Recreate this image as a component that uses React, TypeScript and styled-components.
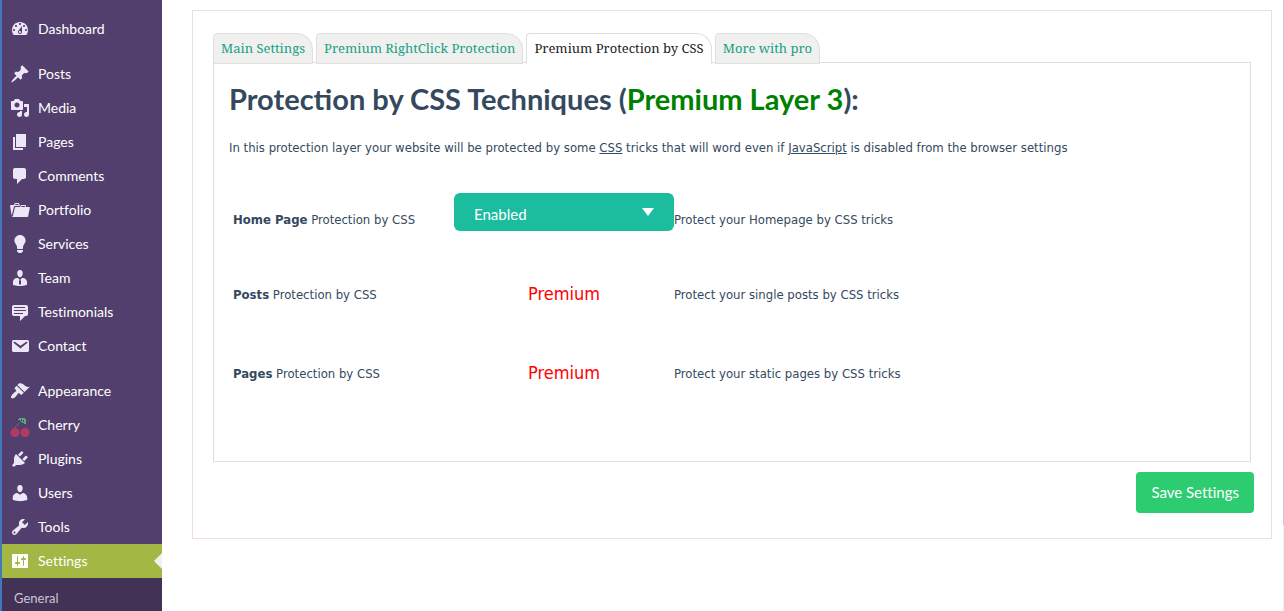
import React from 'react';
import styled, { createGlobalStyle } from 'styled-components';

const GlobalStyle = createGlobalStyle`
  * { box-sizing: border-box; }
  body {
    margin: 0;
    background: #fff;
    color: #34495e;
    font-family: 'DejaVu Sans Condensed', 'DejaVu Sans', sans-serif;
    font-size: 13px;
    font-variant-ligatures: none;
  }
`;

const lato = `Lato, 'Open Sans', sans-serif`;

const Page = styled.div`
  display: flex;
  min-height: 100vh;
`;

const Sidebar = styled.nav`
  display: flex;
  flex-direction: column;
  flex: 0 0 162px;
  padding-top: 12px;
  border-left: 2px solid #4177bb;
  background: #523f6d;
  font-family: ${lato};
  font-size: 14px;
`;

const MenuGroup = styled.ul`
  list-style: none;
  margin: 0 0 11px;
  padding: 0;
  &:last-of-type { margin-bottom: 0; }
`;

const MenuLink = styled.a<{ $active?: boolean }>`
  display: flex;
  align-items: center;
  gap: 8px;
  height: 34px;
  padding-left: 8px;
  color: #fff;
  text-decoration: none;
  background: ${(p) => (p.$active ? '#a3b745' : 'transparent')};
`;

const MenuLabel = styled.span`
  padding-bottom: 2px;
`;

const MenuIcon = styled.svg<{ $active?: boolean }>`
  flex: none;
  width: 20px;
  height: 20px;
  overflow: visible;
  fill: ${(p) => (p.$active ? '#fff' : '#ece6f6')};
`;

const ActiveArrow = styled.span`
  margin-left: auto;
  border: 8px solid transparent;
  border-left-width: 0;
  border-right-color: #f1f1f1;
`;

const Submenu = styled.div`
  flex: 1;
  padding: 10px 12px 0;
  background: #413256;
`;

const SubmenuLink = styled.a`
  color: #cbc5d3;
  font-size: 13px;
  line-height: 20px;
  text-decoration: none;
`;

const Main = styled.main`
  flex: 1;
  min-width: 0;
  padding: 10px 11px 10px 30px;
`;

const SettingsBox = styled.form`
  padding: 22px 17px 25px 20px;
  border: 1px solid #eedde2;
`;

const Tabs = styled.div`
  display: flex;
  gap: 3px;
`;

const Tab = styled.button<{ $active?: boolean }>`
  position: relative;
  height: 31px;
  margin-bottom: -2px;
  padding: 0 7px 2px;
  border: 1px solid #dfdfdf;
  border-bottom-color: ${(p) => (p.$active ? '#fff' : '#dfdfdf')};
  border-radius: 4px 16px 0 0;
  background: ${(p) => (p.$active ? '#fff' : '#f0f0ef')};
  color: ${(p) => (p.$active ? '#222' : '#16a085')};
  font: 13px 'Noto Serif', Georgia, serif;
  white-space: nowrap;
`;

const Panel = styled.section`
  min-height: 400px;
  margin-right: 3px;
  padding: 16px 15px 48px;
  border: 1px solid #dfdfdf;
`;

const Title = styled.h1`
  margin: 0;
  font: bold 29px/40px ${lato};
`;

const Green = styled.span`
  color: #008000;
`;

const Intro = styled.p`
  margin: 20px 0 26px;
  line-height: 18px;
`;

const OptionsTable = styled.table`
  width: 100%;
  border-collapse: collapse;
  table-layout: fixed;
`;

const OptionRow = styled.tr<{ $height: number }>`
  height: ${(p) => p.$height}px;
`;

const NameCell = styled.th`
  width: 225px;
  padding: 0 0 0 4px;
  font-weight: normal;
  text-align: left;
`;

const ControlCell = styled.td`
  width: 220px;
  padding: 0 0 2px;
  text-align: center;
`;

const TextCell = styled.td`
  padding: 0;
`;

const SelectWrap = styled.div`
  display: grid;
  align-items: center;
  margin-bottom: 12px;
`;

const Select = styled.select`
  grid-area: 1 / 1;
  width: 100%;
  height: 38px;
  padding: 4px 20px 0;
  border: 0;
  border-radius: 6px;
  appearance: none;
  background: #1cbc9f;
  color: #fff;
  font: 15px ${lato};
`;

const SelectArrow = styled.svg`
  grid-area: 1 / 1;
  justify-self: end;
  width: 12px;
  height: 8px;
  margin-right: 20px;
  fill: #fff;
  pointer-events: none;
`;

const Premium = styled.span`
  color: #f00;
  font-size: 18px;
`;

const Actions = styled.div`
  display: flex;
  justify-content: flex-end;
  margin-top: 10px;
`;

const SaveButton = styled.button`
  height: 41px;
  padding: 0 15px 2px;
  border: 0;
  border-radius: 4px;
  background: #2ecc71;
  color: #fff;
  font: 15px ${lato};
  font-variant-ligatures: none;
`;

const ScrollTrack = styled.div`
  flex: 0 0 1px;
  display: flex;
  background: #f0f0f0;
`;

const ScrollThumb = styled.div`
  width: 1px;
  height: 86%;
  background: #cfc8cc;
`;

type Item = { label: string; path?: string; active?: boolean };

const groups: Item[][] = [
  [
    {
      label: 'Dashboard',
      path: 'M3.76 16h12.48c1.1-1.37 1.76-3.11 1.76-5 0-4.42-3.58-8-8-8s-8 3.58-8 8c0 1.89.66 3.63 1.76 5zM10 4c.55 0 1 .45 1 1s-.45 1-1 1-1-.45-1-1 .45-1 1-1zM6 6c.55 0 1 .45 1 1s-.45 1-1 1-1-.45-1-1 .45-1 1-1zm8 0c.55 0 1 .45 1 1s-.45 1-1 1-1-.45-1-1 .45-1 1-1zm-5.37 5.55L12 7v6c0 1.1-.9 2-2 2s-2-.9-2-2c0-.57.24-1.08.63-1.45zM4 10c.55 0 1 .45 1 1s-.45 1-1 1-1-.45-1-1 .45-1 1-1zm12 0c.55 0 1 .45 1 1s-.45 1-1 1-1-.45-1-1 .45-1 1-1zm-5 3c0-.55-.45-1-1-1s-1 .45-1 1 .45 1 1 1 1-.45 1-1z',
    },
  ],
  [
    {
      label: 'Posts',
      path: 'M10.44 3.02l1.82-1.82 6.36 6.35-1.83 1.82c-1.05-.68-2.48-.57-3.41.36l-.75.75c-.92.93-1.04 2.35-.35 3.41l-1.83 1.82-2.41-2.41-2.8 2.79c-.42.42-3.38 2.71-3.8 2.29s1.86-3.39 2.28-3.81l2.79-2.79L4.1 9.36l1.83-1.82c1.05.69 2.48.57 3.4-.36l.75-.75c.93-.92 1.05-2.35.36-3.41z',
    },
    {
      label: 'Media',
      path: 'M13 11V4c0-.55-.45-1-1-1h-1.67L9 1H5L3.67 3H2c-.55 0-1 .45-1 1v7c0 .55.45 1 1 1h10c.55 0 1-.45 1-1zM7 4.5c1.38 0 2.5 1.12 2.5 2.5S8.38 9.5 7 9.5 4.5 8.38 4.5 7 5.62 4.5 7 4.5zM14 6h5v10.5c0 1.38-1.12 2.5-2.5 2.5S14 17.88 14 16.5s1.12-2.5 2.5-2.5c.17 0 .34.02.5.05V9h-3V6zm-4 8.05V13h2v3.5c0 1.38-1.12 2.5-2.5 2.5S7 17.88 7 16.5 8.12 14 9.5 14c.17 0 .34.02.5.05z',
    },
    { label: 'Pages', path: 'M6 15V2h10v13H6zm-1 1h8v2H3V5h2v11z' },
    {
      label: 'Comments',
      path: 'M5 2h9c1.1 0 2 .9 2 2v7c0 1.1-.9 2-2 2h-2l-5 5v-5H5c-1.1 0-2-.9-2-2V4c0-1.1.9-2 2-2z',
    },
    {
      label: 'Portfolio',
      path: 'M4 5H.78c-.37 0-.74.32-.69.84l1.56 9.99S3.5 8.47 3.86 6.7c.11-.53.61-.7.98-.7H10s-.7-2.08-.77-2.31C9.11 3.25 8.89 3 8.45 3H5.14c-.36 0-.7.23-.8.64C4.25 4.04 4 5 4 5zm4.88 0h-4s.42-1 .87-1h2.13c.48 0 1 1 1 1zM2.67 16.25c-.31.47-.76.75-1.26.75h15.73c.54 0 .92-.31 1.03-.83.44-2.19 1.68-8.44 1.68-8.44.07-.5-.3-.73-.62-.73H16V5.53c0-.16-.26-.53-.66-.53h-3.76c-.52 0-.87.58-.87.58L10 7H5.59c-.32 0-.63.19-.69.5 0 0-1.59 6.7-1.72 7.33-.07.37-.22.99-.51 1.42zM15.38 7H11s.58-1 1.13-1h2.29c.71 0 .96 1 .96 1z',
    },
    {
      label: 'Services',
      path: 'M10 1c3.11 0 5.63 2.52 5.63 5.62 0 1.84-2.03 4.58-2.03 4.58-.33.44-.6 1.25-.6 1.8v1c0 .55-.45 1-1 1H8c-.55 0-1-.45-1-1v-1c0-.55-.27-1.36-.6-1.8 0 0-2.02-2.74-2.02-4.58C4.38 3.52 6.89 1 10 1zM7 16.87V16h6v.87c0 .62-.13 1.13-.75 1.13H12c0 .62-.4 1-1.02 1h-2c-.61 0-.98-.38-.98-1h-.25c-.62 0-.75-.51-.75-1.13z',
    },
    {
      label: 'Team',
      path: 'M7.3 6l-.03-.19c-.04-.37-.05-.73-.03-1.08.02-.36.1-.71.25-1.04.14-.32.31-.61.52-.86s.49-.46.83-.6c.34-.15.72-.23 1.13-.23.69 0 1.26.2 1.71.59s.76.87.91 1.44.18 1.16.09 1.78l-.03.19c-.01.09-.05.25-.11.48-.05.24-.12.47-.2.69-.08.21-.19.45-.34.72-.14.27-.3.49-.47.69-.18.19-.4.34-.67.48-.27.13-.55.19-.86.19s-.59-.06-.87-.19c-.26-.13-.49-.29-.67-.5-.18-.2-.34-.42-.49-.66-.15-.25-.26-.49-.34-.73-.09-.25-.16-.47-.21-.67-.06-.21-.1-.37-.12-.5zm9.2 6.24c.41.7.5 1.41.5 2.14v2.49c0 .03-.12.08-.29.13-.18.04-.42.13-.97.27-.55.12-1.1.24-1.65.34s-1.19.19-1.95.27c-.75.08-1.46.12-2.13.12-.68 0-1.39-.04-2.14-.12-.75-.07-1.4-.17-1.98-.27-.58-.11-1.08-.23-1.56-.34-.49-.11-.8-.21-1.06-.29L3 16.87v-2.49c0-.75.07-1.46.46-2.15s.81-1.25 1.5-1.68C5.66 10.12 7.19 10 8 10l1.67 1.67L9 13v3l1.02 1.08L11 16v-3l-.68-1.33L11.97 10c.77 0 2.2.07 2.9.52.71.45 1.21 1.02 1.63 1.72z',
    },
    {
      label: 'Testimonials',
      path: 'M4 3h12c.55 0 1.02.2 1.41.59S18 4.45 18 5v7c0 .55-.2 1.02-.59 1.41S16.55 14 16 14h-1l-5 5v-5H4c-.55 0-1.02-.2-1.41-.59S2 12.55 2 12V5c0-.55.2-1.02.59-1.41S3.45 3 4 3zm11 2H4v1h11V5zm1 3H4v1h12V8zm-3 3H4v1h9v-1z',
    },
    {
      label: 'Contact',
      path: 'M3.87 4h13.25C18.37 4 19 4.59 19 5.79v8.42c0 1.19-.63 1.79-1.88 1.79H3.87c-1.25 0-1.88-.6-1.88-1.79V5.79c0-1.2.63-1.79 1.88-1.79zm6.62 8.6l6.74-5.53c.24-.2.43-.66.13-1.07-.29-.41-.82-.42-1.17-.17l-5.7 3.86L4.8 5.83c-.35-.25-.88-.24-1.17.17-.3.41-.11.87.13 1.07z',
    },
  ],
  [
    {
      label: 'Appearance',
      path: 'M14.48 11.06L7.41 3.99l1.5-1.5c.5-.56 2.3-.47 3.51.32 1.21.8 1.43 1.28 2.91 2.1 1.18.64 2.45 1.26 4.45.85zm-.71.71L6.7 4.7 4.93 6.47c-.39.39-.39 1.02 0 1.41l1.06 1.06c.39.39.39 1.03 0 1.42-.6.6-1.43 1.11-2.21 1.69-.35.26-.7.53-1.01.84C1.43 14.23.4 16.08 1.4 17.07c.99 1 2.84-.03 4.18-1.36.31-.31.58-.66.85-1.02.57-.78 1.08-1.61 1.69-2.21.39-.39 1.02-.39 1.41 0l1.06 1.06c.39.39 1.02.39 1.41 0z',
    },
    { label: 'Cherry' },
    {
      label: 'Plugins',
      path: 'M13.11 4.36L9.87 7.6 8 5.73l3.24-3.24c.35-.34 1.05-.2 1.56.32.52.51.66 1.21.31 1.55zm-8 1.77l.91-1.12 9.01 9.01-1.19.84c-.71.71-2.63 1.16-3.82 1.16H6.14L4.9 17.26c-.59.59-1.54.59-2.12 0-.59-.58-.59-1.53 0-2.12l1.24-1.24v-3.88c0-1.13.4-3.19 1.09-3.89zm7.26 3.97l3.24-3.24c.34-.35 1.04-.21 1.55.31.52.51.66 1.21.31 1.55l-3.24 3.25z',
    },
    {
      label: 'Users',
      path: 'M10 9.25c-2.27 0-2.73-3.44-2.73-3.44C7 4.02 7.82 2 9.97 2c2.16 0 2.98 2.02 2.71 3.81 0 0-.41 3.44-2.68 3.44zm0 2.57L12.72 10c2.39 0 4.52 2.33 4.52 4.53v2.49s-3.65 1.13-7.24 1.13c-3.65 0-7.24-1.13-7.24-1.13v-2.49c0-2.25 1.94-4.48 4.47-4.48z',
    },
    {
      label: 'Tools',
      path: 'M16.68 9.77c-1.34 1.34-3.3 1.67-4.95.99l-5.41 6.52c-.99.99-2.59.99-3.58 0s-.99-2.59 0-3.57l6.52-5.42c-.68-1.65-.35-3.61.99-4.95 1.28-1.28 3.12-1.62 4.72-1.06l-2.89 2.89 2.82 2.82 2.86-2.87c.53 1.58.18 3.39-1.08 4.65zM3.81 16.21c.4.39 1.04.39 1.43 0 .4-.4.4-1.04 0-1.43-.39-.4-1.03-.4-1.43 0-.39.39-.39 1.03 0 1.43z',
    },
    {
      label: 'Settings',
      active: true,
      path: 'M18 16V4c0-.55-.45-1-1-1H3c-.55 0-1 .45-1 1v12c0 .55.45 1 1 1h14c.55 0 1-.45 1-1zM8 11h1c.55 0 1 .45 1 1s-.45 1-1 1H8v1.5c0 .28-.22.5-.5.5s-.5-.22-.5-.5V13H6c-.55 0-1-.45-1-1s.45-1 1-1h1V5.500c0-.28.22-.5.5-.5s.5.22.5.5V11zm5-2h-1c-.55 0-1-.45-1-1s.45-1 1-1h1V5.500c0-.28.22-.5.5-.5s.5.22.5.5V7h1c.55 0 1 .45 1 1s-.45 1-1 1h-1v5.500c0 .28-.22.5-.5.5s-.5-.22-.5-.5V9z',
    },
  ],
];

const tabs = ['Main Settings', 'Premium RightClick Protection', 'Premium Protection by CSS', 'More with pro'];
const activeTab = 2;

function CherryIcon() {
  return (
    <MenuIcon viewBox="0 0 20 20" aria-hidden="true">
      <g fill="none" stroke="#5fa777">
        <path d="M5 13l5-6" strokeDasharray="1 1" />
        <path d="M9 3.500h6M8 4.500h3m1 0h4M10 5.500h1m1 0h1m1 0h2M11 6.500h2m1 0h2M12 7.500h4M14 8.500h2" />
      </g>
      <circle cx="5" cy="17.500" r="4.500" fill="#b03a62" />
      <circle cx="15" cy="17.500" r="4.500" fill="#b03a62" />
    </MenuIcon>
  );
}

function MenuItem({ item }: { item: Item }) {
  return (
    <li>
      <MenuLink href="#" $active={item.active} aria-current={item.active ? 'page' : undefined}>
        {item.path ? (
          <MenuIcon viewBox="0 0 20 20" $active={item.active} aria-hidden="true">
            <path d={item.path} fillRule="evenodd" />
          </MenuIcon>
        ) : (
          <CherryIcon />
        )}
        <MenuLabel>{item.label}</MenuLabel>
        {item.active && <ActiveArrow />}
      </MenuLink>
    </li>
  );
}

export default function App() {
  return (
    <>
      <GlobalStyle />
      <Page>
        <Sidebar>
          {groups.map((items) => (
            <MenuGroup key={items[0].label}>
              {items.map((item) => (
                <MenuItem key={item.label} item={item} />
              ))}
            </MenuGroup>
          ))}
          <Submenu>
            <SubmenuLink href="#">General</SubmenuLink>
          </Submenu>
        </Sidebar>
        <Main>
          <SettingsBox onSubmit={(e) => e.preventDefault()}>
            <Tabs role="tablist">
              {tabs.map((label, i) => (
                <Tab key={label} type="button" role="tab" aria-selected={i === activeTab} $active={i === activeTab}>
                  {label}
                </Tab>
              ))}
            </Tabs>
            <Panel role="tabpanel">
              <Title>
                Protection by CSS Techniques (<Green>Premium Layer 3</Green>):
              </Title>
              <Intro>
                In this protection layer your website will be protected by some <u>CSS</u> tricks that will word even if{' '}
                <u>JavaScript</u> is disabled from the browser settings
              </Intro>
              <OptionsTable>
                <tbody>
                  <OptionRow $height={72}>
                    <NameCell scope="row">
                      <label htmlFor="home-css">
                        <b>Home Page</b> Protection by CSS
                      </label>
                    </NameCell>
                    <ControlCell>
                      <SelectWrap>
                        <Select id="home-css" defaultValue="Enabled">
                          <option>Enabled</option>
                          <option>Disabled</option>
                        </Select>
                        <SelectArrow viewBox="0 0 12 8" aria-hidden="true">
                          <path d="M0 0h12L6 8z" />
                        </SelectArrow>
                      </SelectWrap>
                    </ControlCell>
                    <TextCell>Protect your Homepage by CSS tricks</TextCell>
                  </OptionRow>
                  <OptionRow $height={79}>
                    <NameCell scope="row">
                      <b>Posts</b> Protection by CSS
                    </NameCell>
                    <ControlCell>
                      <Premium>Premium</Premium>
                    </ControlCell>
                    <TextCell>Protect your single posts by CSS tricks</TextCell>
                  </OptionRow>
                  <OptionRow $height={79}>
                    <NameCell scope="row">
                      <b>Pages</b> Protection by CSS
                    </NameCell>
                    <ControlCell>
                      <Premium>Premium</Premium>
                    </ControlCell>
                    <TextCell>Protect your static pages by CSS tricks</TextCell>
                  </OptionRow>
                </tbody>
              </OptionsTable>
            </Panel>
            <Actions>
              <SaveButton type="submit">Save Settings</SaveButton>
            </Actions>
          </SettingsBox>
        </Main>
        <ScrollTrack>
          <ScrollThumb />
        </ScrollTrack>
      </Page>
    </>
  );
}
